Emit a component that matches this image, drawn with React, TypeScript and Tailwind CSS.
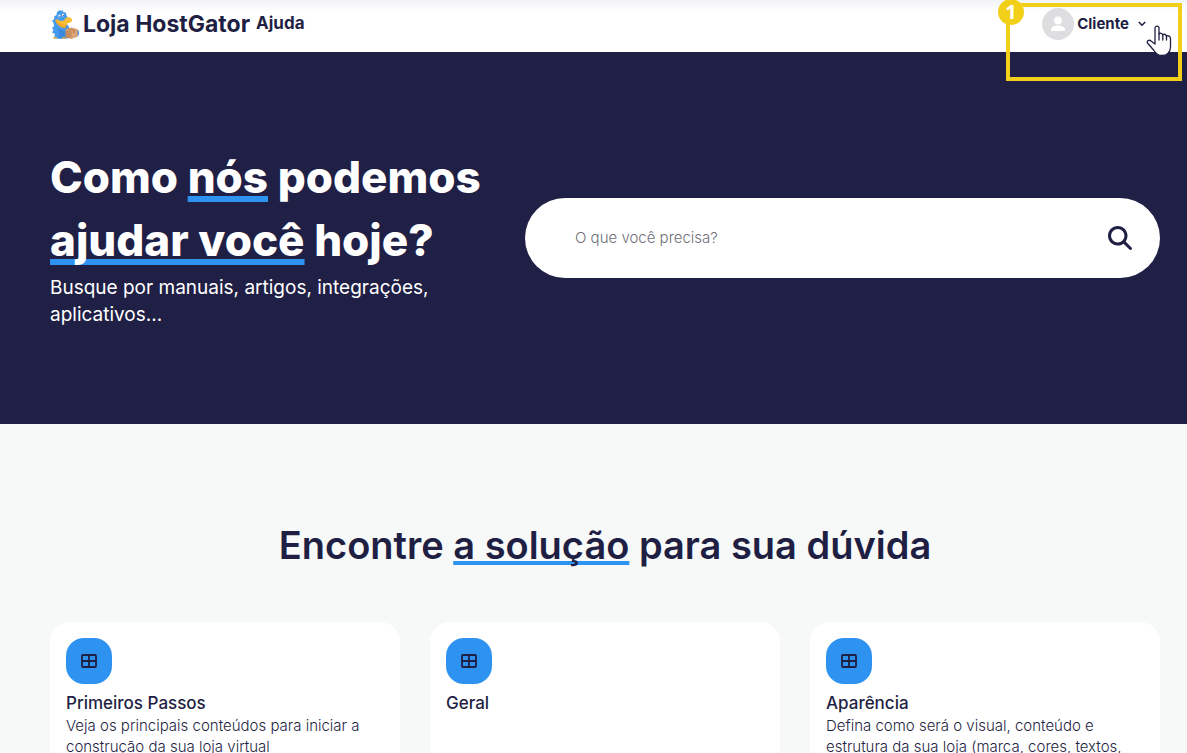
import { FaMagnifyingGlass } from 'react-icons/fa6'

interface HelpCategory {
  title: string
  description?: string
}

const categories: HelpCategory[] = [
  {
    title: 'Primeiros Passos',
    description: 'Veja os principais conteúdos para iniciar a construção da sua loja virtual',
  },
  { title: 'Geral' },
  {
    title: 'Aparência',
    description: 'Defina como será o visual, conteúdo e estrutura da sua loja (marca, cores, textos,',
  },
]

function Mascot() {
  return (
    <svg width="32" height="33" viewBox="0 0 32 33" aria-hidden="true">
      <path
        d="M4 30.500l1-4.500-3-1.500 1.500-2.500-1.500-2 2-2-.5-3L2 12.500l2-1L4.500 8l2-.8L7 4l3-2 1 1.200L12.500 2l1 2.200 2.300.2.700 3.200 1.500 2.400L15 13l4 6-1 11.500z"
        fill="#429bee"
      />
      <path d="M9.500 14l7 3.500-1 2.500-4-1z" fill="#b97a1d" />
      <path d="M5 12c1.500-1 3-.6 4 .6 2 2 4.500 3.900 7.500 4.400l-1.500 3c-4.500 0-8.500-3.500-10-8z" fill="#f2a92c" />
      <path d="M6 11c2.500 1.800 5.500 2.300 8 1.500l1.500-2.500c2-1.200 5.500-.6 6.300 1 .8 1.700-.3 3.500-2 3.800l-2.300.4-1 2.200C12.500 17 8 14.500 6 11z" fill="#f8bd35" />
      <path d="M8 20l7 3.500 2 4-1 3H7.500l2-4z" fill="#378adf" />
      <path d="M3 30.500c0-1.700 2.500-2 4-.8l.5.800zM12 30.500c.4-1.700 3-1.800 4-.5v.5z" fill="#f2b030" />
      <path d="M27 22l1.800.6c.6 2 .4 4-.6 5.400l-1.200.6z" fill="#429bee" />
      <path d="M15.500 21.500l6-2 6 1.700v7.300l-6 2.300-6-1.300z" fill="#c68c5c" />
      <path d="M15.500 21.500l6-2 6 1.700-6 1.600z" fill="#e2b286" />
      <path d="M21.500 22.800l6-1.600v7.300l-6 2.300z" fill="#dba579" />
      <path d="M18 20.600l6 1.500v3" stroke="#ad7445" fill="none" />
      <ellipse cx="9.500" cy="8" rx="1.100" ry="1.500" fill="#fff" />
      <circle cx="9.900" cy="8.300" r=".6" fill="#1f1f44" />
      <ellipse cx="13" cy="7.200" rx="1" ry="1.400" fill="#fff" />
      <circle cx="13.300" cy="7.600" r=".6" fill="#1f1f44" />
    </svg>
  )
}

function GridIcon() {
  return (
    <svg width="16" height="14" viewBox="0 0 16 14" fill="none" stroke="#1f1f44" strokeWidth="1.800" aria-hidden="true">
      <rect x="1" y="1" width="14" height="12" rx="1" />
      <path d="M8 1v12M1 7h14" />
    </svg>
  )
}

function Avatar() {
  return (
    <svg width="32" height="32" viewBox="0 0 32 32" aria-hidden="true">
      <circle cx="16" cy="16" r="16" fill="#dedee0" />
      <circle cx="16" cy="12.500" r="4" fill="#fff" />
      <path d="M9 23v-1.500c0-2.500 3.500-4 7-4s7 1.500 7 4V23z" fill="#fff" />
    </svg>
  )
}

function HandCursor() {
  return (
    <svg width="26" height="32" viewBox="0 0 26 32" className="absolute left-[136px] top-[18px]" aria-hidden="true">
      <path
        d="M9 19V3.200C9 .4 13 .4 13 3.200V9c0 0 0-.2 0-.2 1-1 3.400-.7 3.800 1 1.200-1 3.200-.5 3.600 1.200 1.800-.7 4.100.1 4.100 2.500V22c0 5-3.500 8.500-8.500 8.500-4 0-6.200-2-8-5L1.500 18c-1.200-2.200 1.800-3.700 3.500-2z"
        fill="#fff"
        stroke="#1f1f44"
        strokeWidth="1.300"
        strokeLinejoin="round"
      />
      <path d="M13 9v6M16.800 10v5M20.500 11v4" stroke="#1f1f44" strokeWidth="1.300" strokeLinecap="round" />
    </svg>
  )
}

function Header() {
  return (
    <header className="relative flex h-[52px] items-center justify-between bg-linear-to-b from-[#f3f4f7] to-white to-25% pb-1 pl-[50px] pr-[41px]">
      <a href="#" className="flex items-center">
        <Mascot />
        <span className="ml-px text-[23px] font-bold">Loja HostGator</span>
        <span className="ml-1.5 text-[17px] font-bold">Ajuda</span>
      </a>
      <button type="button" className="flex items-center gap-[3px] text-[15px] font-bold">
        <Avatar />
        Cliente
        <svg width="8" height="6" viewBox="0 0 8 6" fill="none" stroke="currentColor" strokeWidth="1.600" className="ml-1.5" aria-hidden="true">
          <path d="M.8 1L4 4.200 7.200 1" />
        </svg>
      </button>

      {/* passo 1 do tutorial */}
      <div className="pointer-events-none absolute right-[5px] top-[3px] h-[78px] w-[176px] border-4 border-[#f2d01a]">
        <span className="absolute -left-3 -top-2 flex size-[26px] items-center justify-center rounded-full bg-[#f2d01a] font-['Open_Sans'] text-xl font-bold text-white">
          1
        </span>
        <HandCursor />
      </div>
    </header>
  )
}

function Hero() {
  return (
    <section className="bg-[#201f45] py-24 pl-[50px] pr-[27px] text-white">
      <div className="grid grid-cols-12 items-center gap-[30px]">
        <div className="col-span-5">
          <h1 className="-mt-0.5 text-[44px] font-extrabold leading-[63px]">
            Como <span className="underline decoration-[#2e93f0] decoration-[6px] underline-offset-[3px] [text-decoration-skip-ink:none]">nós</span> podemos{' '}
            <span className="underline decoration-[#2e93f0] decoration-[6px] underline-offset-[3px] [text-decoration-skip-ink:none]">ajudar você</span> hoje?
          </h1>
          <p className="pt-0.5 text-[19px] leading-[27px]">Busque por manuais, artigos, integrações, aplicativos...</p>
        </div>
        <form className="col-span-7 flex h-20 items-center rounded-full bg-white pl-[50px] pr-7" onSubmit={(e) => e.preventDefault()}>
          <input
            type="text"
            aria-label="O que você precisa?"
            placeholder="O que você precisa?"
            className="min-w-0 flex-1 text-[15px] font-light text-[#1f1f44] outline-none placeholder:text-[#6f6f78]"
          />
          <button type="submit" aria-label="Buscar" className="text-[#1f1f44]">
            <FaMagnifyingGlass size={24} />
          </button>
        </form>
      </div>
    </section>
  )
}

function CategoryCard({ title, description }: HelpCategory) {
  return (
    <a href="#" className="block rounded-[20px] bg-white p-4">
      <span className="mb-[7px] flex size-[46px] items-center justify-center rounded-[18px] bg-[#2e93f0]">
        <GridIcon />
      </span>
      <h3 className="text-[17px] font-medium leading-6">{title}</h3>
      {description && <p className="text-[15px] font-light leading-[21px]">{description}</p>}
    </a>
  )
}

export default function App() {
  return (
    <div className="min-h-screen bg-[#f7f9f9] font-['Inter',sans-serif] text-[#1f1f44]">
      <Header />
      <Hero />
      <main className="pb-12 pl-[50px] pr-[27px] pt-[94px]">
        <h2 className="mb-[50px] text-center text-[38px] font-semibold leading-[54px]">
          Encontre{' '}
          <span className="underline decoration-[#2e93f0] decoration-4 underline-offset-2 [text-decoration-skip-ink:none]">a solução</span> para sua dúvida
        </h2>
        <div className="grid grid-cols-3 gap-[30px]">
          {categories.map((category) => (
            <CategoryCard key={category.title} {...category} />
          ))}
        </div>
      </main>
    </div>
  )
}
